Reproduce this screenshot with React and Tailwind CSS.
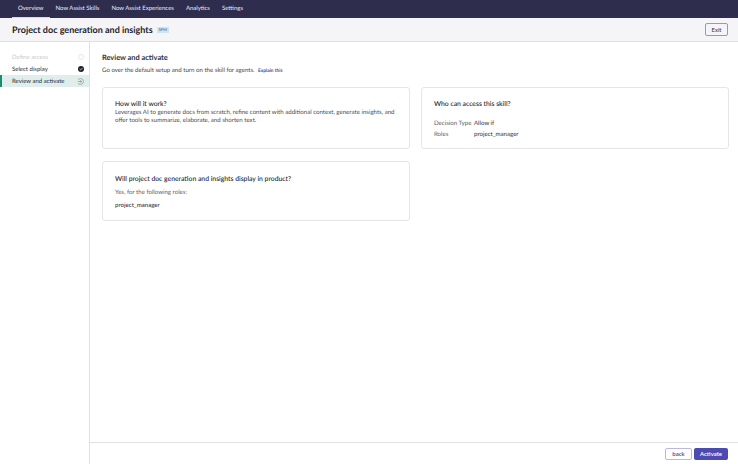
const tabs = ["Overview", "Now Assist Skills", "Now Assist Experiences", "Analytics", "Settings"];

const Card = ({ className, children }) => (
    <div className={`bg-white border border-[#e4e6e7] rounded-[3px] ${className}`}>{children}</div>
);

const App = () => {
    return (
        <div className="w-[738px] h-[464px] flex flex-col overflow-hidden bg-white font-['Lato',sans-serif] text-[#2e2f3a] [text-rendering:geometricPrecision] antialiased">
            <nav className="h-[18px] shrink-0 bg-[#2f2d4e] flex pl-3 text-[6px] text-[#eceaf2]">
                {tabs.map((tab, i) => (
                    <div key={tab} className={`px-[6px] flex items-center border-b ${i === 0 ? "border-[#d8d8e0]" : "border-transparent"}`}>
                        {tab}
                    </div>
                ))}
            </nav>

            <header className="h-[24px] shrink-0 bg-[#f5f5f7] border-b border-[#dfe1e3] flex items-center pl-3 pr-[10px]">
                <h1 className="text-[9px] font-bold text-[#22232e]">Project doc generation and insights</h1>
                <span className="ml-[4px] px-[2px] h-[6px] flex items-center bg-[#cfe4f3] text-[#31527c] text-[4px] leading-none">SPM</span>
                <button className="ml-auto w-[23px] h-[13px] border border-[#9a9ba3] rounded-[2px] text-[6px] flex items-center justify-center text-[#33343f]">
                    Exit
                </button>
            </header>

            <div className="flex-1 flex min-h-0">
                <aside className="w-[90px] shrink-0 border-r border-[#dfe1e3] pt-[9px] text-[6px]">
                    <div className="h-[12px] pl-3 pr-[5px] flex items-center justify-between text-[#c9cacf]">
                        Define access
                        <span className="w-[6px] h-[6px] rounded-full border border-[#e8e8ea]" />
                    </div>
                    <div className="h-[12px] pl-3 pr-[5px] flex items-center justify-between text-[#2e2f3a]">
                        Select display
                        <svg width="6" height="6" viewBox="0 0 6 6">
                            <circle cx="3" cy="3" r="3" fill="#1f2029" />
                            <path d="M1.6 3.1 2.6 4 4.4 2" fill="none" stroke="#fff" strokeWidth="0.7" />
                        </svg>
                    </div>
                    <div className="h-[12px] pl-[10px] pr-[5px] flex items-center justify-between bg-[#dfeeea] border-l-2 border-[#1f8a70] text-[#2e2f3a]">
                        Review and activate
                        <svg width="7" height="7" viewBox="0 0 7 7" fill="none" stroke="#7b7c85" strokeWidth="0.6">
                            <path d="M1.2 1.6A3 3 0 1 1 1.2 5.4" />
                            <path d="M.8 3.5H4.6M3.2 2.2 4.6 3.5 3.2 4.8" />
                        </svg>
                    </div>
                </aside>

                <div className="flex-1 flex flex-col min-w-0">
                    <main className="flex-1 pl-3 pr-[9px] pt-[11px]">
                        <h2 className="text-[7.4px] font-bold leading-[10px] text-[#2e2f3a]">Review and activate</h2>
                        <p className="mt-[2px] text-[6.1px] leading-[12px] text-[#44454f]">
                            Go over the default setup and turn on the skill for agents.
                            <span className="ml-[3.5px] text-[4.8px] font-bold text-[#3f3fb0]">Explain this</span>
                        </p>

                        <div className="mt-[10px] grid grid-cols-[308px_308px] gap-x-[11px] gap-y-[12px]">
                            <Card className="h-[62px] pt-[11px] px-3">
                                <h3 className="text-[6.8px] leading-[10px] font-medium text-[#22232e]">How will it work?</h3>
                                <p className="text-[6.1px] leading-[7.5px] text-[#4a4b56]">
                                    Leverages AI to generate docs from scratch, refine content with additional context, generate insights, and offer tools to summarize, elaborate, and shorten text.
                                </p>
                            </Card>
                            <Card className="h-[62px] pt-[11px] px-3">
                                <h3 className="text-[6.8px] leading-[10px] font-medium text-[#22232e]">Who can access this skill?</h3>
                                <div className="mt-[8.5px] grid grid-cols-[40px_1fr] text-[6.1px] leading-[11px] whitespace-nowrap">
                                    <span className="text-[#5c5d68]">Decision Type</span>
                                    <span>Allow if</span>
                                    <span className="text-[#5c5d68]">Roles</span>
                                    <span>project_manager</span>
                                </div>
                            </Card>
                            <Card className="h-[60px] pt-[12px] px-3">
                                <h3 className="text-[6.8px] leading-[10px] font-medium text-[#22232e]">Will project doc generation and insights display in product?</h3>
                                <p className="mt-[3.5px] text-[6.1px] leading-[10px] text-[#5c5d68]">Yes, for the following roles:</p>
                                <p className="mt-[3.5px] text-[6.1px] leading-[10px] font-medium text-[#33343f]">project_manager</p>
                            </Card>
                        </div>
                    </main>

                    <footer className="h-[22px] shrink-0 border-t border-[#dfe1e3] flex items-center justify-end gap-[2px] pr-[10px] text-[6px]">
                        <button className="w-[27px] h-[12px] border border-[#b9b8de] rounded-[2px] text-[#3f3fa0] flex items-center justify-center font-semibold">back</button>
                        <button className="w-[34px] h-[12px] bg-[#4b4bb0] rounded-[2px] text-white flex items-center justify-center font-semibold">Activate</button>
                    </footer>
                </div>
            </div>
        </div>
    );
};

export default App;
